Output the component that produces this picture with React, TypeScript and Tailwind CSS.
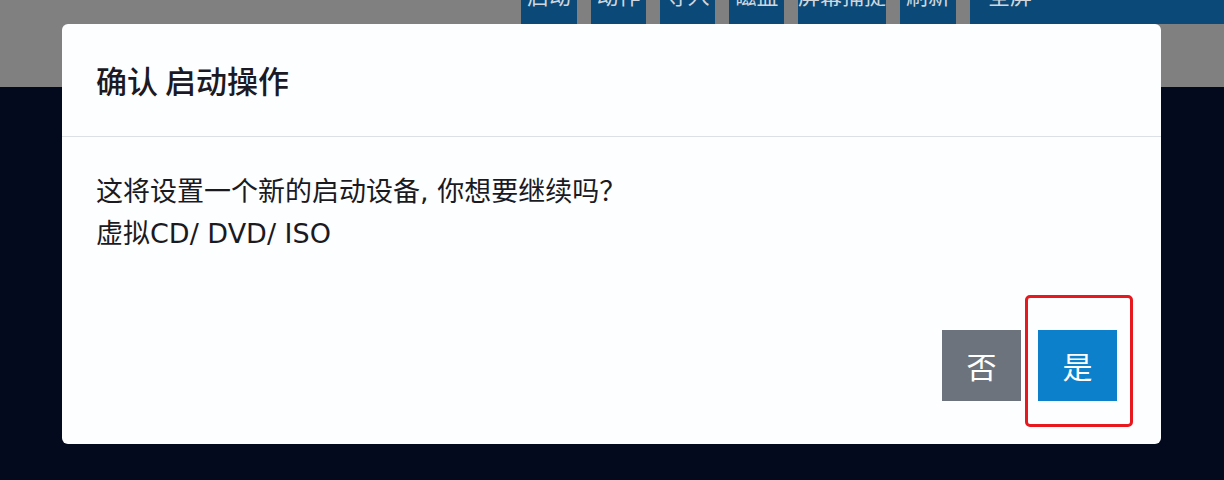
import React from 'react';

const toolbar = [
  { label: '启动', w: 'w-[56px]' },
  { label: '动作', w: 'w-[55px]' },
  { label: '导入', w: 'w-[55px]' },
  { label: '磁盘', w: 'w-[55px]' },
  { label: '屏幕捕捉', w: 'w-[88px]' },
  { label: '刷新', w: 'w-[56px]' },
  { label: '全屏', w: 'w-[260px]' },
];

const font = { fontFamily: '"Noto Sans CJK SC", "Noto Sans", sans-serif' };
const bodyFont = { fontFamily: '"DejaVu Sans", "Noto Sans CJK SC", sans-serif' };

export default function App() {
  return (
    <div className="relative w-full h-[480px] overflow-hidden bg-[#030a1d]" style={font}>
      {/* page behind the dialog */}
      <div className="h-[87px] bg-[#808080] flex gap-[14px] pl-[521px] overflow-hidden">
        {toolbar.map((b) => (
          <div
            key={b.label}
            className={`${b.w} shrink-0 h-[44px] -mt-[20px] bg-[#0b4a78] text-[#cfd6dd] text-[22px] leading-none flex items-end pb-[19px] ${
              b.label === '全屏' ? 'justify-start pl-[18px]' : 'justify-center'
            }`}
          >
            {b.label}
          </div>
        ))}
      </div>

      {/* dialog */}
      <div className="absolute inset-0 pl-[62px] pt-[24px]">
        <div className="w-[1099px] h-[420px] bg-[#fdfeff] rounded-[6px] flex flex-col">
          <div className="h-[113px] shrink-0 border-b border-[#dbe1e6] flex items-center px-[34px]">
            <h2 className="text-[31px] font-medium text-[#1b1a24]">确认 启动操作</h2>
          </div>
          <div className="flex-1 px-[34px] pt-[32px] text-[27px] leading-[42px] text-[#1a1a1f]" style={bodyFont}>
            <p>
              这将设置一个新的启动设备, 你想要继续吗<span style={font}>？</span>
            </p>
            <p>虚拟CD/ DVD/ ISO</p>
          </div>
          <div className="flex justify-end gap-[17px] pr-[44px] pb-[43px]">
            <button className="w-[79px] h-[71px] bg-[#6c737c] text-white text-[30px]">否</button>
            <button className="w-[79px] h-[71px] bg-[#0d80cc] text-white text-[30px]">是</button>
          </div>
        </div>
      </div>

      {/* highlight annotation */}
      <div className="absolute left-[1025px] top-[295px] w-[108px] h-[132px] border-[3px] border-[#e8191e] rounded-[5px]" />
    </div>
  );
}
